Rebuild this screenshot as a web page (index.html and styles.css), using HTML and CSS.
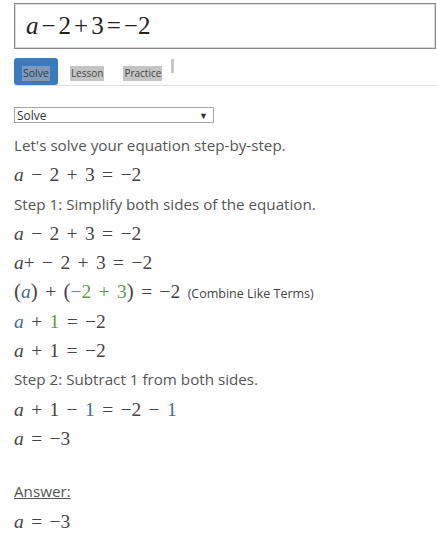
FILE: index.html
```html
<!DOCTYPE html>
<html>
<head>
<meta charset="utf-8">
<link rel="stylesheet" href="styles.css">
</head>
<body>
<div class="page">
  <div class="input-box"><span class="m i">a</span><span class="op">−</span>2<span class="op">+</span>3<span class="op">=</span>−2</div>
  <div class="tabs">
    <span class="tab active"><span class="hl">Solve</span></span>
    <span class="tab"><span class="hl">Lesson</span></span>
    <span class="tab"><span class="hl">Practice</span></span>
    <span class="bar"></span>
  </div>
  <div class="rule"></div>
  <div class="select"><span>Solve</span><span class="arrow">▼</span></div>
  <div class="steps">
    <div class="row text">Let's solve your equation step-by-step.</div>
    <div class="row math"><i>a</i> − 2 + 3 = −2</div>
    <div class="row text">Step 1: Simplify both sides of the equation.</div>
    <div class="row math"><i>a</i> − 2 + 3 = −2</div>
    <div class="row math"><i>a</i>+ − 2 + 3 = −2</div>
    <div class="row math"><span class="paren">(</span><i class="blue">a</i><span class="paren">)</span> + <span class="paren">(</span><span class="green">−2 + 3</span><span class="paren">)</span> = −2 <span class="note">(Combine Like Terms)</span></div>
    <div class="row math"><i class="blue">a</i> + <span class="green">1</span> = −2</div>
    <div class="row math"><i>a</i> + 1 = −2</div>
    <div class="row text">Step 2: Subtract 1 from both sides.</div>
    <div class="row math"><i>a</i> + 1 − <span class="blue">1</span> = −2 − <span class="blue">1</span></div>
    <div class="row math"><i>a</i> = −3</div>
    <div class="row gap"></div>
    <div class="row text"><span class="answer">Answer:</span></div>
    <div class="row math"><i>a</i> = −3</div>
  </div>
</div>
</body>
</html>
```
FILE: styles.css
```css
html, body {
  margin: 0;
  padding: 0;
  background: #fff;
}
.page {
  padding: 3px 0 0 14px;
  font-family: "Open Sans", "Segoe UI", sans-serif;
  color: #555;
}
.input-box {
  box-sizing: border-box;
  height: 46px;
  margin-right: 1px;
  border: 1px solid #8a8a8a;
  box-shadow: inset 0 0 0 1px #d8d8d8;
  padding: 0 0 0 11px;
  font-family: "Liberation Serif", "Times New Roman", serif;
  font-size: 25px;
  line-height: 44px;
  color: #222;
}
.input-box .i { font-style: italic; }
.input-box .op { padding: 0 3px; }
.tabs {
  display: flex;
  align-items: flex-start;
  height: 27px;
  margin-top: 9px;
  font-size: 10px;
  color: #444;
}
.tab {
  display: flex;
  align-items: center;
  height: 27px;
  padding: 0 7px;
  margin-right: 5px;
}
.tab.active {
  background: #3a7bbf;
  border-radius: 3px;
  padding: 0 8px;
  font-size: 10.5px;
  margin-right: 5px;
}
.hl {
  background: #c4c4c4;
  line-height: 15px;
  padding: 0 1px;
  margin-top: 4px;
}
.tab.active .hl {
  background: #7f9ab6;
  color: #2b3e55;
}
.bar {
  width: 3px;
  height: 14px;
  background: #c6c6c6;
  margin-left: -3px;
  margin-top: 1px;
}
.rule {
  height: 1px;
  background: #e0e0e0;
  margin-top: 0;
}
.select {
  box-sizing: border-box;
  width: 200px;
  height: 16px;
  margin-top: 21px;
  border: 1px solid #a6a6a6;
  display: flex;
  justify-content: space-between;
  align-items: center;
  padding: 0 5px 0 2px;
  font-size: 12px;
  color: #333;
}
.arrow {
  font-size: 9px;
  color: #333;
}
.steps {
  margin-top: 8px;
}
.row {
  height: 29.3px;
  line-height: 29px;
  white-space: nowrap;
}
.text {
  font-size: 15.2px;
  color: #555;
}
.math {
  font-family: "Liberation Serif", "Times New Roman", serif;
  font-size: 19.5px;
  color: #444;
  word-spacing: 2.5px;
}
.math i { font-style: italic; }
.gap { height: 24px; }
.blue { color: #3f6aa0; }
.green { color: #5e9b4a; }
.paren { font-size: 21px; }
.note {
  font-family: "Open Sans", "Segoe UI", sans-serif;
  font-size: 12.5px;
  color: #444;
  word-spacing: 0;
}
.answer {
  text-decoration: underline;
}
```
